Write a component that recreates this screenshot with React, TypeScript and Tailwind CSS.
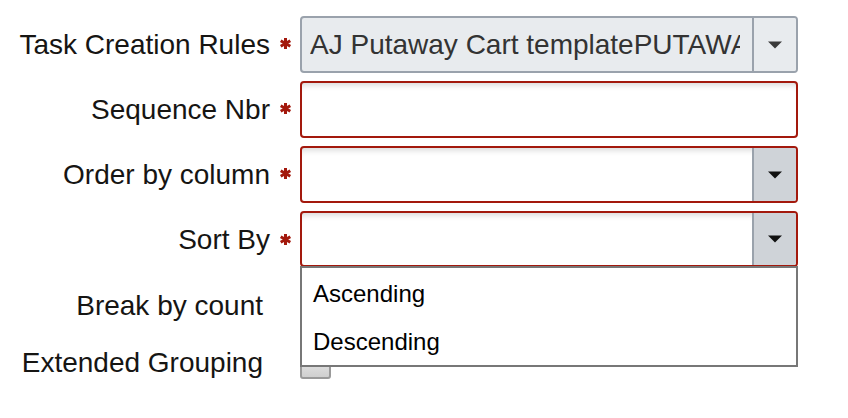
import type { ReactNode } from 'react';

function Asterisk() {
  return (
    <svg width="13" height="13" viewBox="0 0 13 13" className="-translate-y-[1px]">
      <g stroke="#a3190d" strokeWidth="3" strokeLinecap="butt">
        <line x1="6.5" y1="1" x2="6.5" y2="12" />
        <line x1="1.7" y1="3.75" x2="11.3" y2="9.25" />
        <line x1="1.7" y1="9.25" x2="11.3" y2="3.75" />
      </g>
    </svg>
  );
}

function Caret({ color }: { color: string }) {
  return (
    <svg width="14" height="8" viewBox="0 0 14 8">
      <path d="M0 0.5 H14 L7 7.5 Z" fill={color} />
    </svg>
  );
}

function Label({ text, required, h }: { text: string; required?: boolean; h: string }) {
  return (
    <div className={`flex items-center justify-end ${h}`}>
      <span className="whitespace-nowrap text-[#161513]">{text}</span>
      {required ? (
        <span className="flex w-[22px] justify-end">
          <Asterisk />
        </span>
      ) : (
        <span className="w-[29px]" />
      )}
    </div>
  );
}

function Field({ children, invalid, readOnly }: { children?: ReactNode; invalid?: boolean; readOnly?: boolean }) {
  const box = readOnly
    ? 'border-[#9aa2ac] bg-[#e8ebee]'
    : invalid
      ? 'border-[#a3190d] bg-white shadow-[inset_0_7px_6px_-5px_rgba(0,0,0,0.16)]'
      : 'border-[#9aa2ac] bg-white shadow-[inset_0_7px_6px_-5px_rgba(0,0,0,0.16)]';
  return <div className={`flex h-[57px] overflow-hidden rounded-[4px] border-2 ${box}`}>{children}</div>;
}

function SelectButton({ readOnly }: { readOnly?: boolean }) {
  return (
    <div
      className={`flex w-[44px] shrink-0 items-center justify-center border-l-2 border-[#9aa2ac] ${
        readOnly ? 'bg-[#e8ebee]' : 'bg-[#cfd3d8]'
      }`}
    >
      <Caret color={readOnly ? '#3a3a3a' : '#111111'} />
    </div>
  );
}

export default function App() {
  return (
    <div
      className="relative h-[418px] w-[848px] bg-white pt-[16px] text-[28px] leading-none"
      style={{ fontFamily: '"Liberation Sans", Arial, sans-serif' }}
    >
      <div className="grid grid-cols-[292px_498px] gap-x-[8px] gap-y-[8px]">
        <Label text="Task Creation Rules" required h="h-[57px]" />
        <Field readOnly>
          <div className="flex min-w-0 flex-1 pl-[8px] pr-[12px]">
            <div className="flex flex-1 items-center overflow-hidden whitespace-nowrap text-[#333333]">
              AJ Putaway Cart templatePUTAWAY
            </div>
          </div>
          <SelectButton readOnly />
        </Field>

        <Label text="Sequence Nbr" required h="h-[57px]" />
        <Field invalid />

        <Label text="Order by column" required h="h-[57px]" />
        <Field invalid>
          <div className="flex-1" />
          <SelectButton />
        </Field>

        <Label text="Sort By" required h="h-[58px]" />
        <div className="h-[58px]">
          <div className="flex h-[56px] overflow-hidden rounded-[4px] border-2 border-[#a3190d] bg-white shadow-[inset_0_7px_6px_-5px_rgba(0,0,0,0.16)]">
            <div className="flex-1" />
            <SelectButton />
          </div>
        </div>

        <Label text="Break by count" h="h-[57px]" />
        <Field />

        <Label text="Extended Grouping" h="h-[42px]" />
        <div className="flex h-[42px] items-center">
          <div className="h-[31px] w-[31px] rounded-[3px] border-2 border-[#9a9a9a] bg-gradient-to-b from-[#f2f2f2] to-[#cfcfcf]" />
        </div>
      </div>

      <div className="absolute left-[300px] top-[266px] w-[498px] border-2 border-[#777777] bg-white pt-[2px] text-[24px] text-black">
        <div className="flex h-[48px] items-center pl-[11px]">Ascending</div>
        <div className="flex h-[47px] items-center pl-[11px]">Descending</div>
      </div>
    </div>
  );
}
